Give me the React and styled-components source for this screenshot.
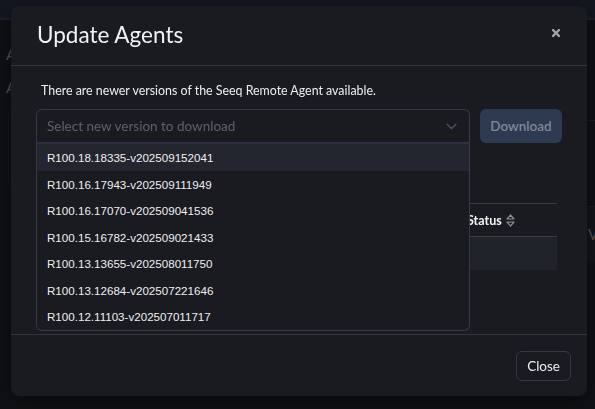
import styled, { createGlobalStyle } from 'styled-components';
import { FaTimes } from 'react-icons/fa';
import { ChevronDown } from 'lucide-react';

const GlobalStyle = createGlobalStyle`
    html, body {
        margin: 0;
        padding: 0;
        background: #15171b;
        overflow: hidden;
        font-family: Lato, "Noto Sans", sans-serif;
    }
    * {
        box-sizing: border-box;
    }
`;

const versions = [
    'R100.18.18335-v202509152041',
    'R100.16.17943-v202509111949',
    'R100.16.17070-v202509041536',
    'R100.15.16782-v202509021433',
    'R100.13.13655-v202508011750',
    'R100.13.12684-v202507221646',
    'R100.12.11103-v202507011717',
];

const StyledPage = styled.div`
    width: 595px;
    height: 409px;
    display: flex;
    flex-direction: column;
    background: #15171b;
`;
const StyledTopBar = styled.div`
    height: 20px;
    background: #1c2330;
    border-bottom: 2px solid #2a3446;
`;
const StyledPageBody = styled.div`
    flex: 1;
    display: flex;
    justify-content: space-between;
`;
const StyledLeftColumn = styled.div`
    padding: 24px 0 0 6px;
    display: flex;
    flex-direction: column;
    gap: 14px;
`;
const StyledSideLabel = styled.span`
    font-size: 16px;
    color: #8d9097;
`;
const StyledSidePanel = styled.div`
    width: 30px;
    height: 78px;
    border: 1px solid #22262e;
    border-radius: 6px;
    margin-left: 2px;
`;
const StyledRightColumn = styled.div`
    padding-top: 100px;
    margin-right: -20px;
    display: flex;
    flex-direction: column;
    gap: 8px;
`;
const StyledRightPanel = styled.div`
    width: 30px;
    height: ${({tall}) => tall ? '78px' : '56px'};
    border-top: 1px solid #2a2d34;
    background: ${({tall}) => tall ? 'transparent' : '#1b1d22'};
    padding: 18px 0 0 3px;
    font-size: 15px;
    color: #8d9097;
`;
const StyledOverlay = styled.div`
    position: fixed;
    inset: 0;
    background: rgba(10, 11, 14, 0.45);
`;
const StyledModal = styled.div`
    position: fixed;
    left: 11px;
    top: 6px;
    width: 576px;
    height: 390px;
    background: #1a1b20;
    border-radius: 8px;
    box-shadow: 0 4px 20px rgba(0, 0, 0, .5);
    display: flex;
    flex-direction: column;
    color: #e9eaec;
`;
const StyledHeader = styled.div`
    height: 60px;
    padding: 0 25px 0 26px;
    display: flex;
    justify-content: space-between;
    align-items: center;
    border-bottom: 1px solid #34363c;
`;
const StyledTitle = styled.h2`
    margin: 0 0 2px 0;
    font-size: 22.5px;
    font-weight: 400;
    color: #f1f2f4;
`;
const StyledCloseIcon = styled.button`
    background: none;
    border: none;
    padding: 0;
    display: flex;
    color: #a3a5a9;
    cursor: pointer;
    margin-bottom: 6px;
`;
const StyledBody = styled.div`
    flex: 1;
    padding: 16px 25px 0 25px;
    position: relative;
`;
const StyledText = styled.p`
    margin: 0 0 10px 5px;
    font-size: 12.4px;
    line-height: 17px;
    color: #eceef0;
`;
const StyledRow = styled.div`
    display: flex;
    gap: 10px;
    position: relative;
`;
const StyledSelectWrapper = styled.div`
    position: relative;
    width: 434px;
`;
const StyledSelect = styled.div`
    height: 34px;
    border: 1px solid #343a47;
    border-bottom-color: #2b3140;
    border-radius: 6px 6px 0 0;
    padding: 0 9px 0 10px;
    display: flex;
    justify-content: space-between;
    align-items: center;
    font-size: 13.5px;
    color: #5d616b;
`;
const StyledMenu = styled.ul`
    position: absolute;
    left: 0;
    top: 34px;
    width: 100%;
    margin: 0;
    padding: 0;
    list-style: none;
    background: #1a1b20;
    border: 1px solid #343a47;
    border-top: 1px solid #2b3140;
    border-radius: 0 0 6px 6px;
    z-index: 2;
`;
const StyledMenuItem = styled.li`
    height: 26.5px;
    padding: 0 10px;
    display: flex;
    align-items: center;
    font-family: "Liberation Sans", Arial, sans-serif;
    font-size: 11.6px;
    color: #eeeff1;
    background: ${({active}) => active ? '#23262e' : 'transparent'};
    &:first-child {
        height: 27px;
    }
`;
const StyledDownload = styled.button`
    width: 82px;
    height: 34px;
    border: none;
    border-radius: 6px;
    background: #2d3a50;
    color: #7f8899;
    font-family: Lato, "Noto Sans", sans-serif;
    font-size: 13.5px;
    font-weight: 600;
`;
const StyledTable = styled.div`
    margin-top: 60px;
    width: 521px;
`;
const StyledTableHead = styled.div`
    height: 34px;
    border-top: 1px solid #3a3c42;
    border-bottom: 1px solid #3a3c42;
    display: flex;
    align-items: center;
    padding-left: 431px;
    gap: 4px;
    font-size: 12.5px;
    font-weight: 700;
    color: #f4f4f5;
`;
const StyledTableRow = styled.div`
    height: 33px;
    background: #20232a;
`;
const StyledFooter = styled.div`
    height: 62px;
    border-top: 1px solid #34363c;
    display: flex;
    justify-content: flex-end;
    align-items: center;
    padding-right: 16px;
`;
const StyledCloseButton = styled.button`
    height: 30px;
    padding: 0 10px;
    border: 1px solid #333846;
    border-radius: 6px;
    background: transparent;
    color: #eceef0;
    font-family: Lato, "Noto Sans", sans-serif;
    font-size: 13.5px;
    margin-top: 1px;
`;

const SortIcon = () => (
    <svg width="9" height="13" viewBox="0 0 9 13">
        <path d="M4.5 1 L8 5 L1 5 Z" fill="none" stroke="#8a8c91" strokeWidth="1.2" strokeLinejoin="round" />
        <path d="M4.5 12 L8 8 L1 8 Z" fill="none" stroke="#8a8c91" strokeWidth="1.2" strokeLinejoin="round" />
    </svg>
);

const App = () => {
    return (
        <>
            <GlobalStyle />
            <StyledPage>
                <StyledTopBar />
                <StyledPageBody>
                    <StyledLeftColumn>
                        <StyledSideLabel>A</StyledSideLabel>
                        <StyledSideLabel>A</StyledSideLabel>
                        <StyledSidePanel />
                    </StyledLeftColumn>
                    <StyledRightColumn>
                        <StyledRightPanel tall />
                        <StyledRightPanel>V</StyledRightPanel>
                    </StyledRightColumn>
                </StyledPageBody>
            </StyledPage>
            <StyledOverlay />
            <StyledModal>
                <StyledHeader>
                    <StyledTitle>Update Agents</StyledTitle>
                    <StyledCloseIcon type='button'><FaTimes size={12} /></StyledCloseIcon>
                </StyledHeader>
                <StyledBody>
                    <StyledText>There are newer versions of the Seeq Remote Agent available.</StyledText>
                    <StyledRow>
                        <StyledSelectWrapper>
                            <StyledSelect>
                                <span>Select new version to download</span>
                                <ChevronDown size={17} color='#464c5a' strokeWidth={2} />
                            </StyledSelect>
                            <StyledMenu>
                                {versions.map((version, index) => (
                                    <StyledMenuItem key={version} active={index === 0}>{version}</StyledMenuItem>
                                ))}
                            </StyledMenu>
                        </StyledSelectWrapper>
                        <StyledDownload type='button'>Download</StyledDownload>
                    </StyledRow>
                    <StyledTable>
                        <StyledTableHead>
                            <span>Status</span>
                            <SortIcon />
                        </StyledTableHead>
                        <StyledTableRow />
                    </StyledTable>
                </StyledBody>
                <StyledFooter>
                    <StyledCloseButton type='button'>Close</StyledCloseButton>
                </StyledFooter>
            </StyledModal>
        </>
    )
}

export default App
